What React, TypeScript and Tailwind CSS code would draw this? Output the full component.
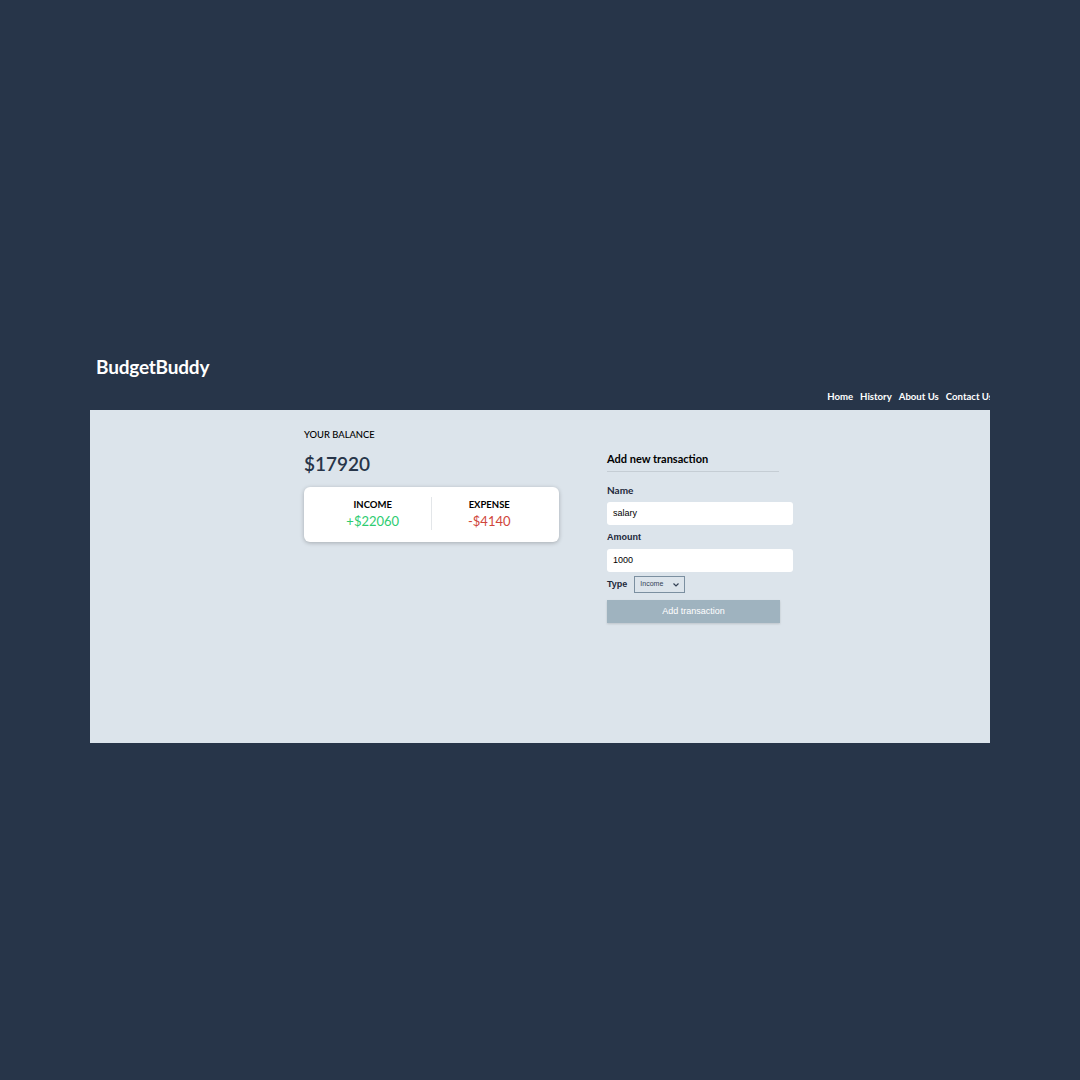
const App = () => {
	return (
		<div className="min-h-[1080px] w-full bg-[#273549] font-['Lato','Liberation_Sans',sans-serif]">
			<div className="mx-auto w-[900px] pt-[350px]">
				<header className="h-[60px] overflow-hidden relative">
					<h1 className="pl-[6px] pt-[6px] text-[19px] font-bold leading-[22px] text-white tracking-[-0.2px]">
						BudgetBuddy
					</h1>
					<nav className="absolute right-[-3px] top-[41px] flex gap-[7px] text-[9.6px] font-bold leading-[12px] text-white">
						<a>Home</a>
						<a>History</a>
						<a>About Us</a>
						<a>Contact Us</a>
					</nav>
				</header>
				<main className="flex h-[333px] gap-[48px] bg-[#dce4eb] pl-[214px] pt-[19px]">
					<section className="w-[255px]">
						<h4 className="text-[9.4px] font-medium leading-[12px] text-black">YOUR BALANCE</h4>
						<h2 className="mt-[12px] text-[19px] font-semibold leading-[22px] text-[#273549]">$17920</h2>
						<div className="mt-[12px] flex h-[55px] items-center rounded-[6px] bg-white pb-[3px] shadow-[0_1px_4px_rgba(0,0,0,0.25)]">
							<div className="flex flex-1 flex-col items-center border-r border-[#e3e6e9] py-[1px] pl-[11px]">
								<span className="text-[9.5px] font-bold leading-[14px] text-black">INCOME</span>
								<span className="mt-[1px] text-[13px] leading-[16px] text-[#2ecc71]">+$22060</span>
							</div>
							<div className="flex flex-1 flex-col items-center py-[1px] pr-[12px]">
								<span className="text-[9.5px] font-bold leading-[14px] text-black">EXPENSE</span>
								<span className="mt-[1px] text-[13px] leading-[16px] text-[#d0463a]">-$4140</span>
							</div>
						</div>
					</section>
					<section className="w-[186px] pt-[23px]">
						<h3 className="w-[172px] border-b border-[#c5cdd4] pb-[5px] text-[11px] font-bold leading-[14px] text-black">
							Add new transaction
						</h3>
						<label className="mt-[12px] block text-[10px] font-bold leading-[12px] text-[#1e293b]">Name</label>
						<div className="mt-[6px] flex h-[23px] items-center rounded-[3px] bg-white px-[6px] text-[9px] font-['Liberation_Sans',sans-serif] text-black">
							salary
						</div>
						<label className="mt-[6px] block text-[9px] font-bold leading-[12px] font-['Liberation_Sans',sans-serif] text-[#1e293b]">Amount</label>
						<div className="mt-[6px] flex h-[23px] items-center rounded-[3px] bg-white px-[6px] text-[9px] font-['Liberation_Sans',sans-serif] text-black">
							1000
						</div>
						<div className="mt-[4px] flex items-center gap-[7px] font-['Liberation_Sans',sans-serif]">
							<span className="text-[9px] font-bold text-[#1e293b]">Type</span>
							<div className="flex h-[17px] w-[51px] items-center justify-between border border-[#7b8fa0] bg-[#dce4eb] px-[5px] text-[7px] text-[#334155]">
								<span>Income</span>
								<svg width="6" height="4" viewBox="0 0 6 4" fill="none" stroke="#334155" strokeWidth="1.2">
									<path d="M0.5 0.5 L3 3 L5.5 0.5" />
								</svg>
							</div>
						</div>
						<button className="mt-[7px] h-[23px] w-[173px] bg-[#9fb3bf] text-[9px] font-['Liberation_Sans',sans-serif] text-white shadow-[0_1px_2px_rgba(0,0,0,0.15)]">
							Add transaction
						</button>
					</section>
				</main>
			</div>
		</div>
	);
};

export default App;
